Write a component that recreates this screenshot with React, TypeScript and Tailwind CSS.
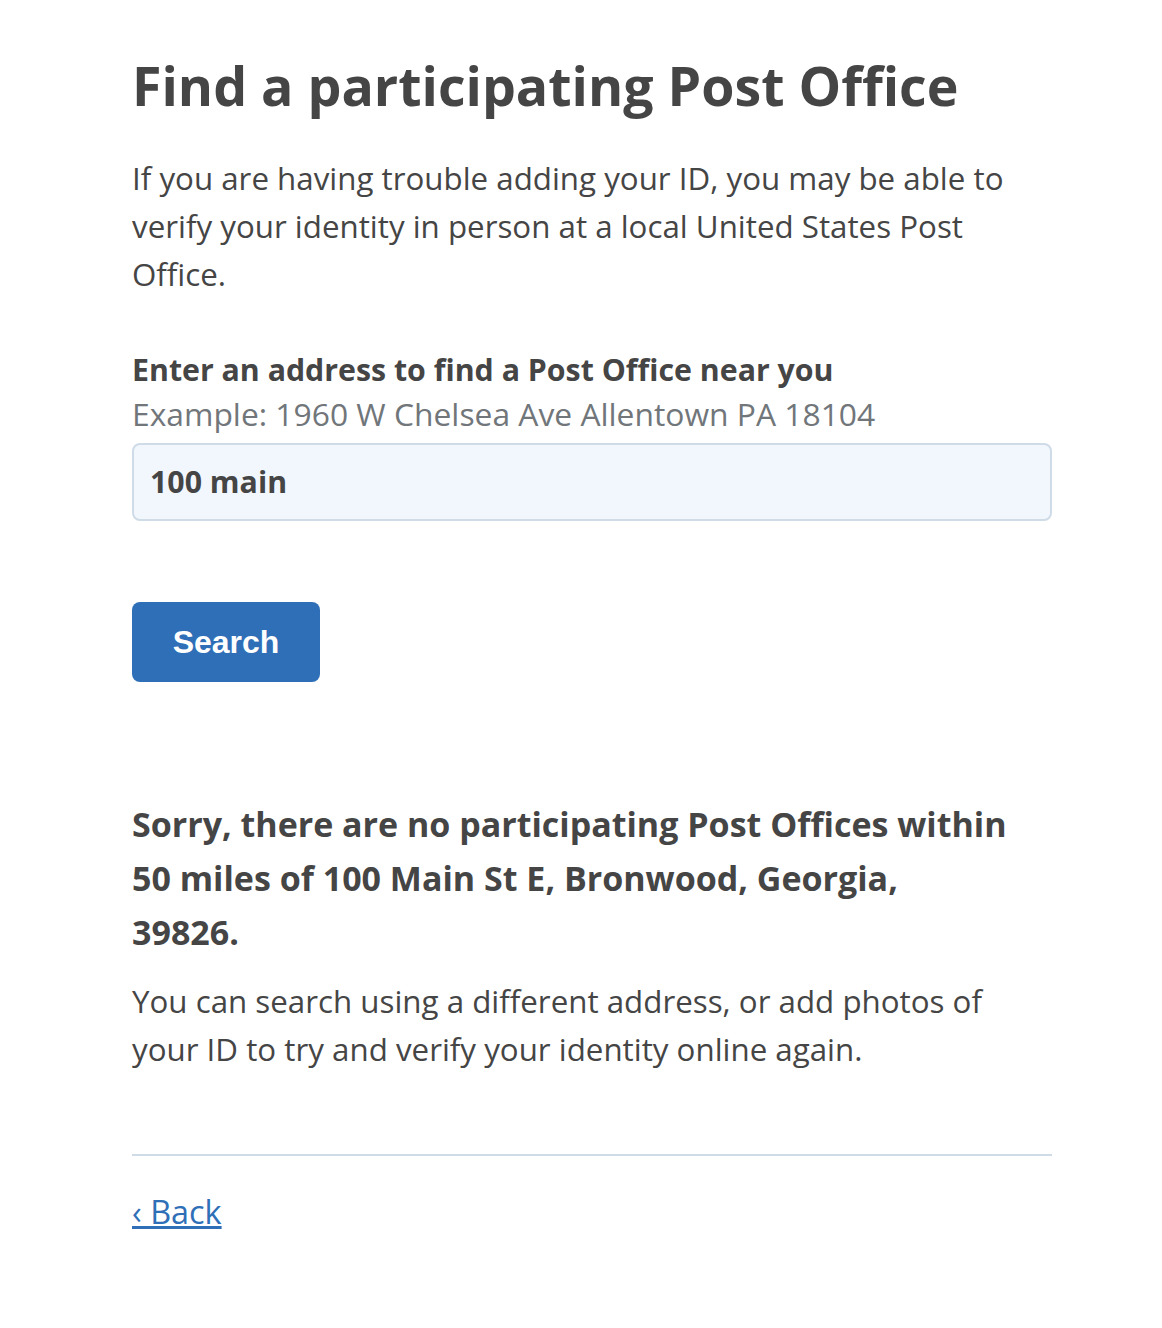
import React from "react";

export default function App() {
  return (
    <div className="min-h-[1328px] bg-white" style={{ fontFamily: '"Open Sans", "Noto Sans", sans-serif' }}>
      <div className="ml-[132px] w-[920px] pt-[50px] text-[#454545]">
        <h1 className="text-[53.7px] font-bold leading-[72px]">Find a participating Post Office</h1>
        <p className="mt-[32px] text-[31.3px] leading-[48px]">
          If you are having trouble adding your ID, you may be able to verify your identity in person at a local United States Post Office.
        </p>
        <div className="mt-[50px] text-[30.3px] font-bold leading-[44px]">Enter an address to find a Post Office near you</div>
        <div className="text-[31.8px] leading-[44px] text-[#71767a]">Example: 1960 W Chelsea Ave Allentown PA 18104</div>
        <div className="mt-[7px] flex h-[78px] items-center rounded-[8px] border-2 border-[#d0dbe8] bg-[#f2f7fd] px-[16px] text-[30.3px] font-bold">
          100 main
        </div>
        <button
          className="mt-[81px] flex h-[80px] w-[188px] items-center justify-center rounded-[8px] bg-[#2f6fb7] text-[32px] font-bold text-white"
          style={{ fontFamily: '"Liberation Sans", Arial, sans-serif' }}
        >
          Search
        </button>
        <h2 className="mt-[115px] max-w-[877px] text-[34px] font-bold leading-[54px]">
          Sorry, there are no participating Post Offices within 50 miles of 100 Main St E, Bronwood, Georgia, 39826.
        </h2>
        <p className="mt-[18px] text-[31.3px] leading-[48px]">
          You can search using a different address, or add photos of your ID to try and verify your identity online again.
        </p>
        <div className="mt-[81px] h-[2px] bg-[#d0dbe8]" />
        <a href="#" className="mt-[33px] inline-block text-[32.4px] leading-[44px] text-[#2f6fb7] underline">
          ‹ Back
        </a>
      </div>
    </div>
  );
}
